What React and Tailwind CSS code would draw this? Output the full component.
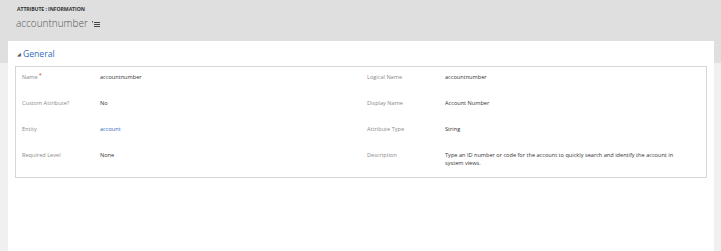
import React from "react";

const leftRows = [
  { label: "Name", value: "accountnumber", required: true },
  { label: "Custom Attribute?", value: "No" },
  { label: "Entity", value: "account", link: true },
  { label: "Required Level", value: "None" },
];

const rightRows = [
  { label: "Logical Name", value: "accountnumber" },
  { label: "Display Name", value: "Account Number" },
  { label: "Attribute Type", value: "String" },
  {
    label: "Description",
    value:
      "Type an ID number or code for the account to quickly search and identify the account in system views.",
  },
];

const Field = ({ label, value, required, link }) => (
  <div className="flex h-[26px] items-start">
    <div className="w-[78px] shrink-0 text-[5.6px] leading-[9px] text-[#8a8a8a]">
      {label}
      {required && <span className="relative -top-[2px] ml-[1px] text-[#e0312b]">*</span>}
    </div>
    <div
      className={`pr-[20px] text-[5.6px] leading-[8px] ${link ? "text-[#2e6cc0]" : "text-[#333]"}`}
    >
      {value}
    </div>
  </div>
);

export default function App() {
  return (
    <div
      className="flex h-[251px] w-[721px] flex-col overflow-hidden bg-[#f0f0f0]"
      style={{ fontFamily: '"Open Sans", "Liberation Sans", sans-serif' }}
    >
      {/* Header */}
      <div className="h-[63px] shrink-0 bg-[#dfdfdf] pl-[16px] pt-[5px]">
        <div className="pl-[1px] text-[5.2px] font-bold leading-[8px] tracking-[-0.1px] text-[#333]">
          ATTRIBUTE : INFORMATION
        </div>
        <div className="mt-[3px] flex items-center gap-[4px]">
          <span className="text-[10px] font-light leading-[14px] text-[#555]">accountnumber</span>
          <svg width="8" height="6" viewBox="0 0 8 6" className="mt-[1px]">
            <rect x="0" y="0" width="1" height="1.5" fill="#555" />
            <rect x="2" y="1" width="6" height="1" fill="#444" />
            <rect x="2" y="3" width="6" height="1" fill="#444" />
            <rect x="2" y="5" width="6" height="1" fill="#444" />
          </svg>
        </div>
      </div>

      {/* Panel */}
      <div className="-mt-[22px] ml-[8px] w-[706px] flex-1 bg-white px-[7px] pt-[6px]">
        <div className="flex items-center gap-[2px] pl-[2px]">
          <span className="text-[5px] leading-none text-[#555]">◢</span>
          <span className="text-[8.6px] leading-[14px] text-[#2f6bb8]">General</span>
        </div>
        <div className="mt-[5px] grid grid-cols-2 border border-[#d6d6d6] pt-[6px]">
          <div className="pl-[6px]">
            {leftRows.map((r) => (
              <Field key={r.label} {...r} />
            ))}
          </div>
          <div className="pl-[6px]">
            {rightRows.map((r) => (
              <Field key={r.label} {...r} />
            ))}
          </div>
        </div>
      </div>
    </div>
  );
}
